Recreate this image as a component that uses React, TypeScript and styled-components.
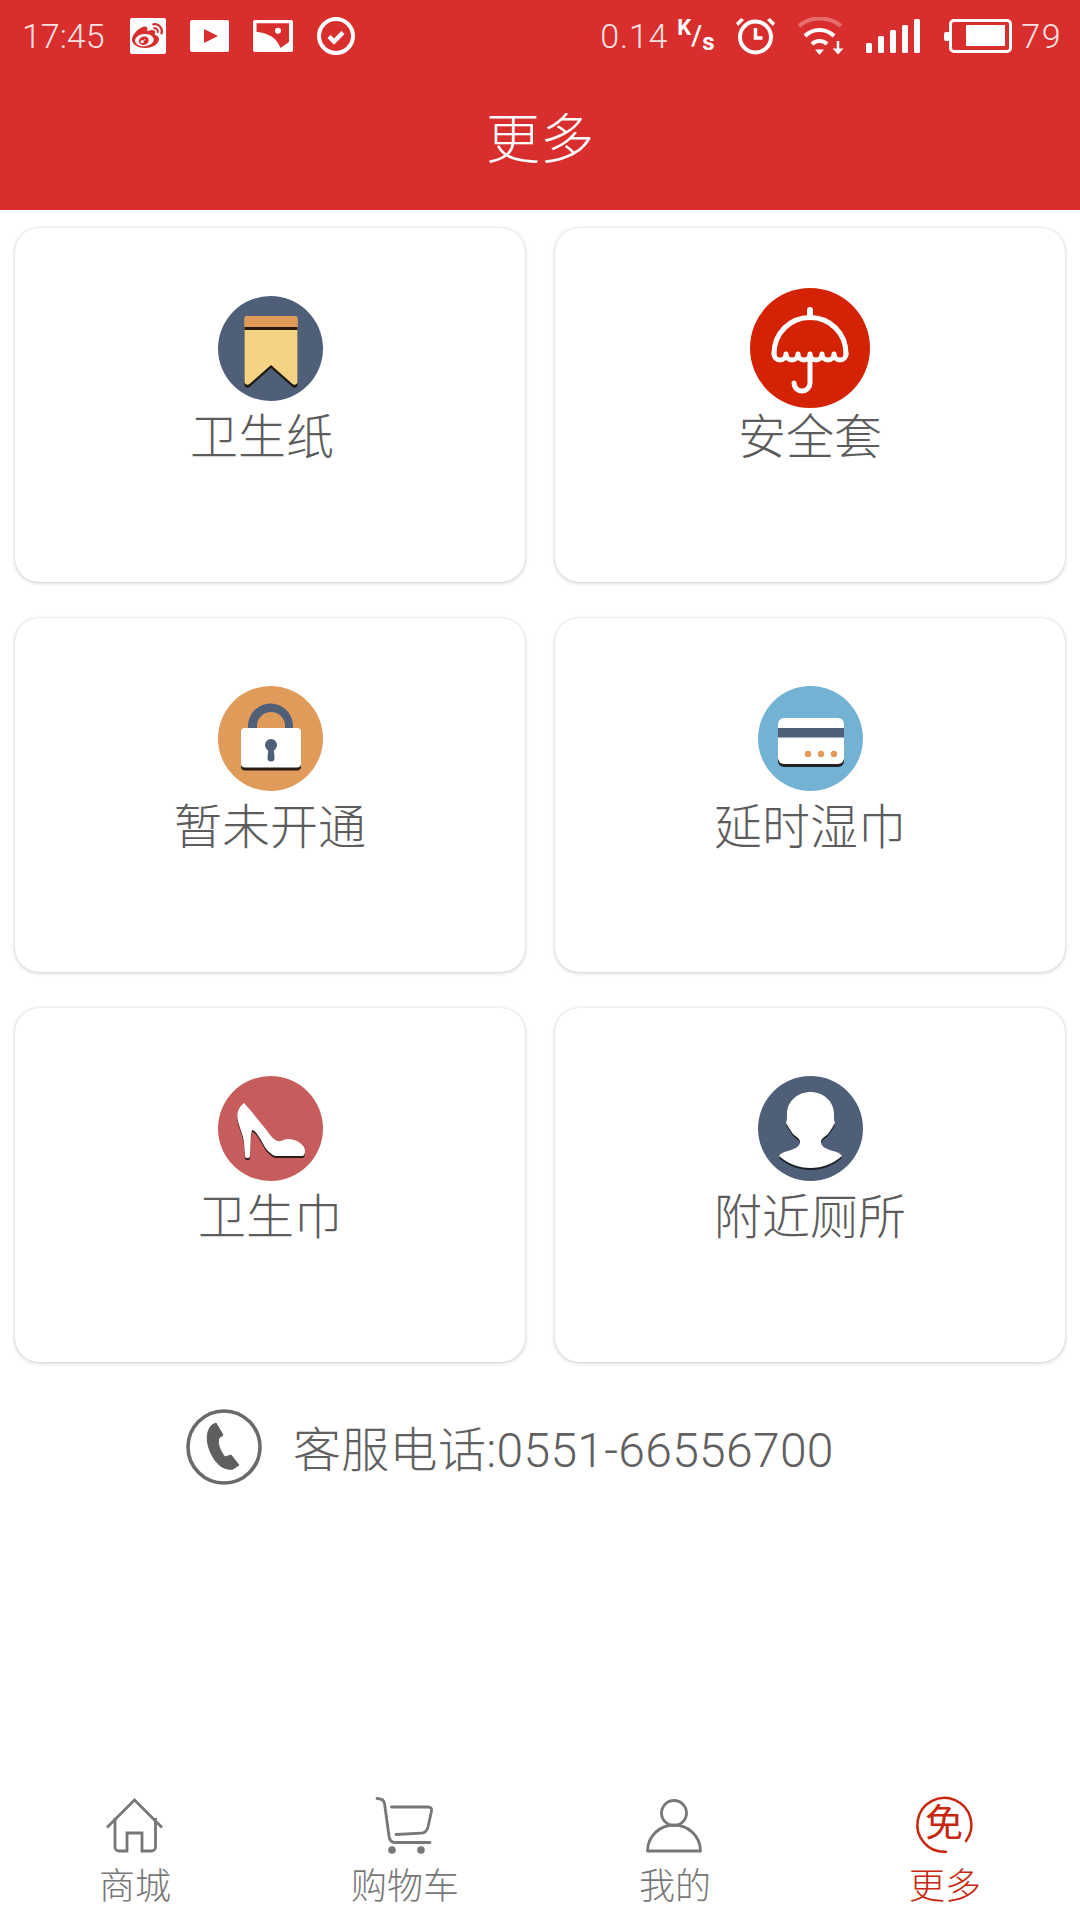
import React from 'react';
import styled, { createGlobalStyle } from 'styled-components';
import { FaWeibo } from 'react-icons/fa';

const FONT = `Roboto, "Noto Sans CJK SC", sans-serif`;

const Global = createGlobalStyle`
  html, body { margin: 0; padding: 0; background: #fff; }
  body { font-family: ${FONT}; font-weight: 300; }
`;

const Page = styled.div`
  width: 1080px;
  height: 1920px;
  display: flex;
  flex-direction: column;
  background: #fff;
  overflow: hidden;
`;

const Header = styled.header`
  height: 210px;
  flex: none;
  background: #d92e2e;
  color: #fff;
  display: flex;
  flex-direction: column;
`;

const StatusBar = styled.div`
  height: 72px;
  padding: 0 18px 0 22px;
  display: flex;
  align-items: center;
  justify-content: space-between;
`;

const StatusGroup = styled.div`
  display: flex;
  align-items: center;
`;

const StatusText = styled.span<{ $track?: number; $gap?: number }>`
  margin-left: ${(p) => p.$gap ?? 0}px;
  font-size: 34px;
  font-weight: 300;
  line-height: 40px;
  letter-spacing: ${(p) => p.$track ?? 0}px;
  color: #fbe3e3;
`;

const StatusIcon = styled.svg<{ $gap: number }>`
  flex: none;
  display: block;
  margin-left: ${(p) => p.$gap}px;
`;

const WeiboBadge = styled.span`
  width: 36px;
  height: 36px;
  margin-left: 25px;
  flex: none;
  border-radius: 2px;
  background: #fff;
  color: #d92e2e;
  display: flex;
  align-items: center;
  justify-content: center;
  font-size: 31px;
`;

const SpeedUnit = styled.span`
  width: 36px;
  height: 36px;
  margin-left: 9px;
  display: flex;
  font-weight: 700;
  color: #fff;
`;

const UnitTop = styled.span`
  align-self: flex-start;
  font-size: 22px;
  line-height: 20px;
`;

const UnitMid = styled.span`
  align-self: center;
  font-weight: 500;
  font-size: 28px;
  line-height: 28px;
`;

const UnitBottom = styled.span`
  align-self: flex-end;
  font-size: 24px;
  line-height: 24px;
`;

const Title = styled.h1`
  margin: 0;
  flex: 1;
  padding-bottom: 12px;
  display: flex;
  align-items: center;
  justify-content: center;
  font-size: 54px;
  font-weight: 300;
`;

const Grid = styled.section`
  padding: 18px 15px 0;
  display: grid;
  grid-template-columns: 510px 510px;
  grid-auto-rows: 354px;
  column-gap: 30px;
  row-gap: 36px;
`;

const Card = styled.article`
  box-sizing: border-box;
  padding-top: 60px;
  border-radius: 24px;
  background: #fff;
  box-shadow: 0 0 1px rgba(0, 0, 0, 0.16), 0 1px 4px rgba(0, 0, 0, 0.2);
  display: flex;
  flex-direction: column;
  align-items: center;
`;

const IconSlot = styled.div`
  height: 120px;
  display: flex;
  align-items: center;
  justify-content: center;
`;

const CardLabel = styled.div<{ $pullLeft?: number }>`
  height: 60px;
  padding-right: ${(p) => p.$pullLeft ?? 0}px;
  font-size: 48px;
  font-weight: 300;
  line-height: 60px;
  color: #5c5c5c;
`;

const ServiceRow = styled.div`
  height: 76px;
  margin-top: 47px;
  padding-left: 186px;
  display: flex;
  align-items: center;
  gap: 31px;
`;

const ServiceText = styled.span`
  padding-bottom: 3px;
  font-size: 48px;
  font-weight: 300;
  letter-spacing: 0.3px;
  color: #606060;
  white-space: nowrap;
`;

const TabBar = styled.nav`
  margin-top: auto;
  height: 123px;
  flex: none;
  display: grid;
  grid-template-columns: repeat(4, 270px);
`;

const Tab = styled.div<{ $active?: boolean }>`
  display: flex;
  flex-direction: column;
  align-items: center;
  color: ${(p) => (p.$active ? '#c8260f' : '#777')};
`;

const TabIcon = styled.svg`
  display: block;
  flex: none;
  overflow: visible;
`;

const TabLabel = styled.span`
  margin-top: 10px;
  font-size: 36px;
  font-weight: 300;
  line-height: 44px;
`;

const Disc = ({ size = 105, fill, children }: { size?: number; fill: string; children: React.ReactNode }) => (
  <svg width={size} height={size} viewBox={`0 0 ${size} ${size}`}>
    <circle cx={size / 2} cy={size / 2} r={size / 2} fill={fill} />
    {children}
  </svg>
);

const Bookmark = () => (
  <Disc fill="#4f5f78">
    <path d="M26.500 24a3 3 0 0 1 3-3h47a3 3 0 0 1 3 3v65a3 3 0 0 1-5 2L53 72 31.500 91a3 3 0 0 1-5-2z" fill="#1f1a14" />
    <path d="M26.500 23a3 3 0 0 1 3-3h47a3 3 0 0 1 3 3v63a3 3 0 0 1-5 2L53 69 31.500 88a3 3 0 0 1-5-2z" fill="#f6d285" />
    <path d="M26.500 23a3 3 0 0 1 3-3h47a3 3 0 0 1 3 3v8h-53z" fill="#e09a5a" />
    <rect x="26.500" y="31" width="53" height="3" fill="#2a1c10" />
  </Disc>
);

const Umbrella = () => (
  <Disc size={120} fill="#d42205">
    <g fill="none" stroke="#fff" strokeWidth="5" strokeLinecap="round" strokeLinejoin="round">
      <path d="M60 22v7" strokeWidth="6" />
      <path d="M24 66C24 45 40 29.500 60 29.500S96 45 96 66" />
      <path d="M24 66a6 6 0 0 0 12 0a6 6 0 0 0 12 0a6 6 0 0 0 12 0a6 6 0 0 0 12 0a6 6 0 0 0 12 0a6 6 0 0 0 12 0" />
      <path d="M60 73v22a8 8 0 0 1-16 0" />
    </g>
  </Disc>
);

const Padlock = () => (
  <Disc fill="#e09a5a">
    <path d="M30 46V40a22.500 22.500 0 0 1 45 0v6h-8V40a14 14 0 0 0-28 0v6z" fill="#4f5f78" />
    <rect x="23" y="46" width="60" height="38.500" rx="4" fill="#2a1c10" />
    <rect x="23" y="42" width="60" height="39.500" rx="4" fill="#fff" />
    <circle cx="53" cy="59" r="6" fill="#4f5f78" />
    <path d="M50.500 60h5l1 12a3.500 3.500 0 0 1-7 0z" fill="#4f5f78" />
  </Disc>
);

const CreditCard = () => (
  <Disc fill="#74b2d4">
    <rect x="20" y="36" width="66" height="45" rx="6" fill="#1f2226" />
    <rect x="20" y="32" width="66" height="46" rx="6" fill="#fff" />
    <rect x="20" y="42" width="66" height="9.500" fill="#4f5f78" />
    <circle cx="50" cy="68" r="3.200" fill="#e09a5a" />
    <circle cx="63" cy="68" r="3.200" fill="#e09a5a" />
    <circle cx="76" cy="68" r="3.200" fill="#e09a5a" />
  </Disc>
);

const SHOE =
  'M26 27C22 30 19 35 19.300 41C20 49 25 58 26 66L27 80Q27 82 29 82H30Q32 82 32 80C33 70 32 62 34 54C37 54 40 59 43 64C46 70 50 77 57 80H84Q87 80 87 75C87 70 82 66 76 64C71 62 67 63 63 65C58 66 54 62 50 56C43 47 34 36 26 27Z';

const Shoe = () => (
  <Disc fill="#c65c5c">
    <path d={SHOE} fill="#2a1a1a" transform="translate(0 2)" />
    <path d={SHOE} fill="#fff" />
  </Disc>
);

const PERSON =
  'M52.500 16C40 16 29 25 29 38C29 43 29 44 28 47C30 50 32 54 35 58C38 61 42 62 42 66C42 71 36 73 30 75C26 76 23 77 21 80C30 88 41 92 52.500 92C64 92 75 88 84 80C82 77 79 76 75 75C69 73 63 71 63 66C63 62 67 61 70 58C73 54 75 50 77 47C76 44 76 43 76 38C76 25 65 16 52.500 16Z';

const Person = () => (
  <Disc fill="#4f5f78">
    <path d={PERSON} fill="#1b1f26" transform="translate(0 2)" />
    <path d={PERSON} fill="#fff" />
  </Disc>
);

const Phone = () => (
  <svg width="76" height="76" viewBox="0 0 76 76">
    <circle cx="38" cy="38" r="36" fill="none" stroke="#6a6a6a" strokeWidth="3.600" />
    <path
      d="M26 16l4-2 7 12-4 3C31 34 34 42 39 48l6-2 8 10-6 4C36 62 28 52 24 42 20 32 20 22 26 16z"
      fill="#5f5f5f"
      stroke="#5f5f5f"
      strokeWidth="1"
      strokeLinejoin="round"
    />
  </svg>
);

const HomeIcon = () => (
  <TabIcon width="58" height="58" viewBox="0 0 58 58" fill="none" stroke="currentColor" strokeWidth="2.800">
    <path d="M1 30.500L28.500 3 56 30.500" />
    <path d="M9 21v29a4 4 0 0 0 4 4h8V36h15v18h9.500a4 4 0 0 0 4-4V21" />
  </TabIcon>
);

const CartIcon = () => (
  <TabIcon width="58" height="58" viewBox="0 0 58 58" fill="none" stroke="currentColor" strokeWidth="2.800" strokeLinecap="round">
    <path d="M1 1.500c4 0 7 1.500 7.500 5L13 39c.5 4 2.500 6.500 6 6.500h35" />
    <path d="M15.500 10H52c3 0 4 1.500 3.500 4L52 30c-1 4-3 6-7 6.200L20 37.500" />
    <circle cx="16" cy="53" r="3.800" fill="currentColor" stroke="none" />
    <circle cx="45" cy="53" r="3.800" fill="currentColor" stroke="none" />
  </TabIcon>
);

const UserIcon = () => (
  <TabIcon width="58" height="58" viewBox="0 0 58 58" fill="none" stroke="currentColor" strokeWidth="2.800">
    <circle cx="28" cy="16" r="12.500" />
    <path d="M1.500 54C1.500 39 14 28 28 28s26.500 11 26.500 26z" strokeLinejoin="round" />
  </TabIcon>
);

const FreeGlyph = styled.text`
  font-size: 38px;
  font-weight: 400;
  font-family: "Noto Sans CJK SC", sans-serif;
  fill: currentColor;
`;

const FreeIcon = () => (
  <TabIcon width="58" height="58" viewBox="0 0 58 58" fill="none">
    <path d="M30 54.800A27 27 0 1 1 50 44" stroke="currentColor" strokeWidth="2.500" strokeLinecap="round" />
    <FreeGlyph x="28" y="39" textAnchor="middle">免</FreeGlyph>
  </TabIcon>
);

const App = () => (
  <Page>
    <Global />
    <Header>
      <StatusBar>
        <StatusGroup>
          <StatusText>17:45</StatusText>
          <WeiboBadge><FaWeibo /></WeiboBadge>
          <StatusIcon $gap={24} width="39" height="32" viewBox="0 0 39 32">
            <rect width="39" height="32" rx="2" fill="#fff" />
            <path d="M14 9l14 7-14 7z" fill="#d92e2e" />
          </StatusIcon>
          <StatusIcon $gap={24} width="40" height="32" viewBox="0 0 40 32">
            <rect width="40" height="32" rx="2" fill="#fff" />
            <path d="M3.500 3.300H36V22l-8.500 6C25 21 20 14 3.500 11.700z" fill="#d92e2e" />
            <circle cx="25" cy="10.700" r="3" fill="#fff" />
          </StatusIcon>
          <StatusIcon $gap={24} width="38" height="38" viewBox="0 0 38 38" fill="none" stroke="#fff">
            <circle cx="19" cy="19" r="17" strokeWidth="4" />
            <path d="M12 19.500l5 5 9-9" strokeWidth="4.500" />
          </StatusIcon>
        </StatusGroup>
        <StatusGroup>
          <StatusText $track={0.8}>0.14</StatusText>
          <SpeedUnit>
            <UnitTop>K</UnitTop>
            <UnitMid>/</UnitMid>
            <UnitBottom>s</UnitBottom>
          </SpeedUnit>
          <StatusIcon $gap={23} width="39" height="38" viewBox="0 0 39 38" fill="none" stroke="#fff">
            <circle cx="19.500" cy="20" r="15.500" strokeWidth="4" />
            <path d="M19.500 11v10h7" strokeWidth="3.500" />
            <path d="M0 6l5-5 3 2-6 6zM39 6l-5-5-3 2 6 6z" fill="#fff" stroke="none" />
          </StatusIcon>
          <StatusIcon $gap={23} width="46" height="38" viewBox="0 0 46 38" fill="none" stroke="#fff">
            <path d="M1 9C12-1 31-1 43 9" strokeWidth="4" strokeOpacity="0.3" />
            <path d="M7 19C15 11 28 11 36 19" strokeWidth="4" />
            <path d="M14 27c4-4 11-4 15 0" strokeWidth="4" />
            <path d="M17 32.500h9L21.500 38z" fill="#fff" stroke="none" />
            <path d="M40 24v9" strokeWidth="2.500" />
            <path d="M34.500 31.500h11L40 37.500z" fill="#fff" stroke="none" />
          </StatusIcon>
          <StatusIcon $gap={22} width="54" height="34" viewBox="0 0 54 34" fill="#fff">
            <rect x="0" y="24" width="6" height="10" rx="1.500" />
            <rect x="12" y="17" width="6" height="17" rx="1.500" />
            <rect x="24" y="11" width="6" height="23" rx="1.500" />
            <rect x="36" y="6" width="6" height="28" rx="1.500" />
            <rect x="48" y="0" width="6" height="34" rx="1.500" />
          </StatusIcon>
          <StatusIcon $gap={24} width="68" height="34" viewBox="0 0 68 34">
            <rect x="0" y="13" width="6" height="9" rx="2" fill="#fff" />
            <rect x="6.500" y="1.500" width="60" height="31" rx="3.500" fill="none" stroke="#fff" strokeWidth="3" />
            <rect x="22" y="6" width="39" height="21" fill="#fff" />
          </StatusIcon>
          <StatusText $track={1.5} $gap={9}>79</StatusText>
        </StatusGroup>
      </StatusBar>
      <Title>更多</Title>
    </Header>

    <Grid>
      <Card><IconSlot><Bookmark /></IconSlot><CardLabel $pullLeft={16}>卫生纸</CardLabel></Card>
      <Card><IconSlot><Umbrella /></IconSlot><CardLabel>安全套</CardLabel></Card>
      <Card><IconSlot><Padlock /></IconSlot><CardLabel>暂未开通</CardLabel></Card>
      <Card><IconSlot><CreditCard /></IconSlot><CardLabel>延时湿巾</CardLabel></Card>
      <Card><IconSlot><Shoe /></IconSlot><CardLabel>卫生巾</CardLabel></Card>
      <Card><IconSlot><Person /></IconSlot><CardLabel>附近厕所</CardLabel></Card>
    </Grid>

    <ServiceRow>
      <Phone />
      <ServiceText>客服电话:0551-66556700</ServiceText>
    </ServiceRow>

    <TabBar>
      <Tab><HomeIcon /><TabLabel>商城</TabLabel></Tab>
      <Tab><CartIcon /><TabLabel>购物车</TabLabel></Tab>
      <Tab><UserIcon /><TabLabel>我的</TabLabel></Tab>
      <Tab $active><FreeIcon /><TabLabel>更多</TabLabel></Tab>
    </TabBar>
  </Page>
);

export default App;
